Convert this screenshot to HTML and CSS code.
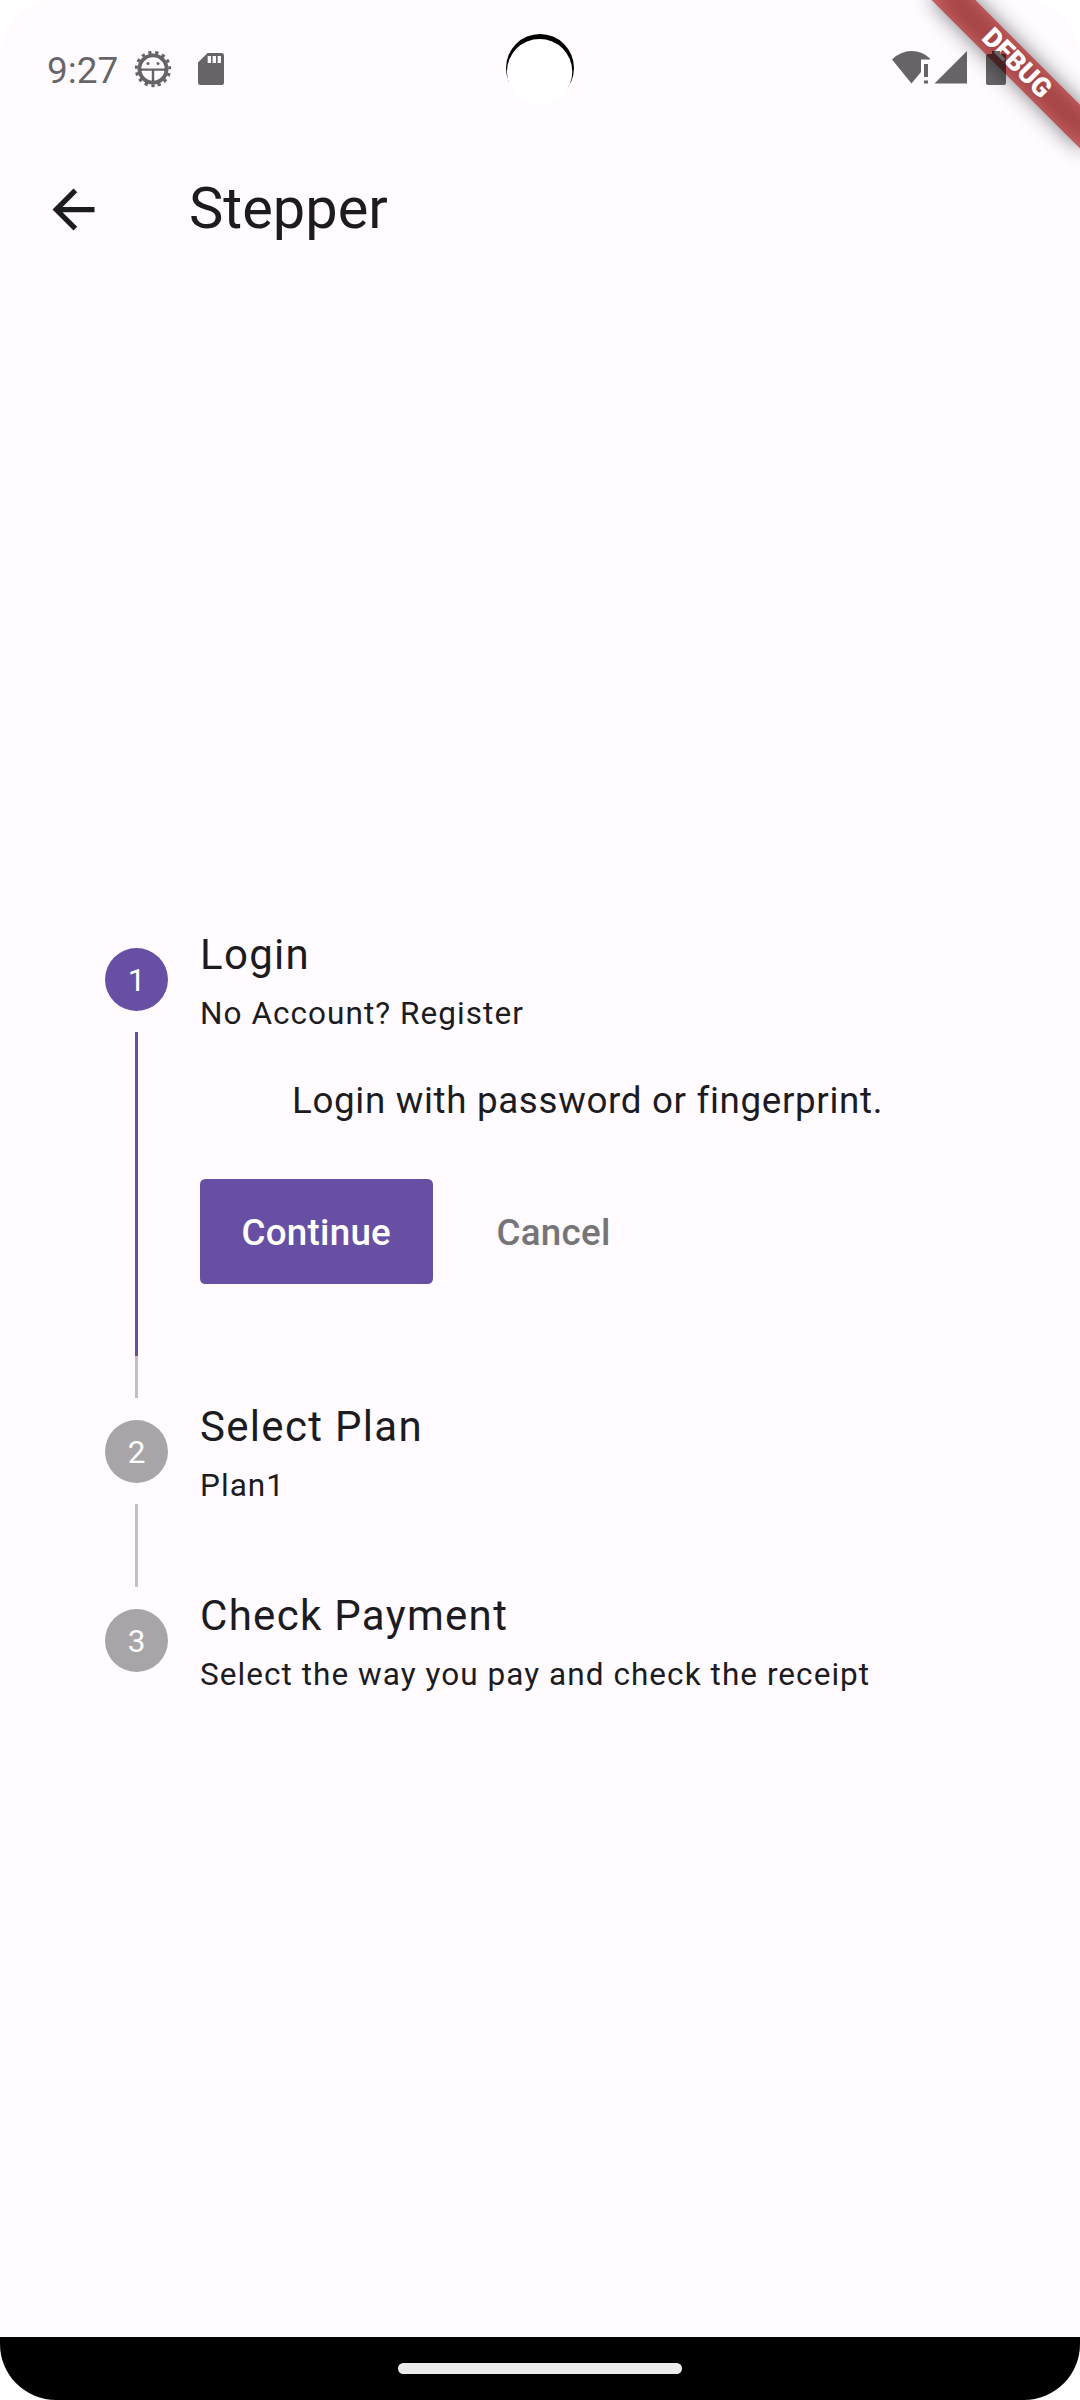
FILE: index.html
```html
<!DOCTYPE html>
<html lang="en">
<head>
<meta charset="utf-8">
<title>Stepper</title>
<link rel="stylesheet" href="styles.css">
</head>
<body>
<div class="screen">
  <div class="ribbon"><div class="ribbon-shadow"></div><div class="ribbon-band">DEBUG</div></div>
  <header class="status">
    <span class="time">9:27</span>
    <svg class="gear" width="38" height="38" viewBox="-19 -19 38 38">
      <circle r="13.6" fill="none" stroke="currentColor" stroke-width="3.8"/>
      <circle r="16.8" fill="none" stroke="currentColor" stroke-width="2.8" stroke-dasharray="3.300 3.737" transform="rotate(84.4)"/>
      <path d="M-12 -0.600H12V1.800H1.200V12H-1.200V1.800H-12Z" fill="currentColor"/>
      <circle cx="-5" cy="-5.500" r="1.500" fill="currentColor"/><circle cx="5" cy="-5.500" r="1.500" fill="currentColor"/>
    </svg>
    <svg class="sd" width="26" height="32" viewBox="0 0 26 32">
      <path fill="currentColor" fill-rule="evenodd" d="M9.500 0H23.500Q26 0 26 2.500V29.500Q26 32 23.500 32H2.500Q0 32 0 29.500V9.500ZM9.700 3V10H13V3ZM14.600 3V10H18V3ZM19.600 3V10H23V3Z"/>
    </svg>
    <span class="spring"></span>
    <svg class="signals" width="116" height="36" viewBox="0 0 116 36">
      <path fill="currentColor" d="M0 9.500Q8.500 1 19.500 1Q30.500 1 38 8.500V9.500H29V22L19.500 33.500Z"/>
      <path fill="currentColor" d="M32 14H36V27H32ZM32 30.500H36V33.500H32Z"/>
      <path fill="currentColor" d="M75 1V33.500H42.500Z"/>
      <path fill="currentColor" d="M100 1H108V4H112Q114 4 114 6V33Q114 35 112 35H96Q94 35 94 33V6Q94 4 96 4H100Z"/>
    </svg>
  </header>
  <svg class="camera" width="72" height="76" viewBox="504 32 72 76">
    <circle cx="540" cy="68" r="34"/><circle cx="539.600" cy="71.700" r="32.700" fill="#fff"/>
  </svg>
  <div class="appbar">
    <svg class="back" width="63" height="63" viewBox="0 0 24 24"><path fill="currentColor" d="M20 11H7.830l5.590-5.590L12 4l-8 8 8 8 1.410-1.410L7.830 13H20v-2z"/></svg>
    <h1>Stepper</h1>
  </div>
  <main class="stepper">
    <section class="step first">
      <div class="rail"><span class="dot active">1</span><span class="line active"></span><span class="line tail"></span></div>
      <div class="body">
        <h2>Login</h2>
        <p class="sub">No Account? Register</p>
        <p class="content">Login with password or fingerprint.</p>
        <div class="actions"><button class="primary">Continue</button><button class="plain">Cancel</button></div>
      </div>
    </section>
    <section class="step second">
      <div class="rail"><span class="dot">2</span><span class="line"></span></div>
      <div class="body"><h2>Select Plan</h2><p class="sub">Plan1</p></div>
    </section>
    <section class="step">
      <div class="rail"><span class="dot">3</span></div>
      <div class="body"><h2>Check Payment</h2><p class="sub">Select the way you pay and check the receipt</p></div>
    </section>
  </main>
  <footer class="nav"><span class="handle"></span></footer>
</div>
</body>
</html>
```
FILE: styles.css
```css
* { box-sizing: border-box; }
body { margin: 0; background: #fff; font-family: Roboto, sans-serif; color: #1c1b1f; }
h1, h2, p { margin: 0; font-weight: 400; }
.screen {
  position: relative;
  display: flex;
  flex-direction: column;
  width: 1080px;
  height: 2400px;
  overflow: hidden;
  border-radius: 56px;
  background: #fffbff;
}
.status {
  position: relative;
  display: flex;
  align-items: center;
  height: 138px;
  padding: 0 72px 0 47px;
  color: rgba(0, 0, 0, 0.6);
}
.time { width: 87px; padding-top: 3px; font-size: 37px; line-height: 44px; }
.sd { margin-left: 26px; }
.spring { flex: 1; }
.signals { margin-top: -2px; }
.camera { position: absolute; left: 504px; top: 32px; }
.ribbon { position: absolute; left: 1080px; top: 0; transform: rotate(45deg); transform-origin: 0 0; }
.ribbon-shadow, .ribbon-band { position: absolute; left: -105px; top: 73.500px; width: 210px; height: 31.500px; }
.ribbon-shadow { background: rgba(0, 0, 0, 0.5); filter: blur(10.400px); }
.ribbon-band {
  background: rgba(183, 28, 28, 0.627);
  color: #fff;
  font-size: 26.800px;
  font-weight: 900;
  line-height: 31.500px;
  text-align: center;
}
.appbar { display: flex; align-items: center; height: 143px; padding-left: 42px; }
.appbar h1 { margin-left: 84px; padding-bottom: 3px; font-size: 57.750px; line-height: 74px; }
.stepper { flex: 1; padding: 645px 0 0 105px; }
.step { display: flex; gap: 31.500px; height: 189px; }
.step.first { height: 472px; }
.rail { display: flex; flex-direction: column; align-items: center; width: 63px; padding-top: 22px; }
.dot {
  flex: none;
  width: 63px;
  height: 63px;
  margin-bottom: 21px;
  border-radius: 50%;
  background: #a7a5a8;
  color: #fff;
  font-size: 31.500px;
  line-height: 65px;
  text-align: center;
}
.dot.active { background: #6750a4; }
.line { width: 2.625px; height: 84px; background: #c1bfc1; }
.line.active { height: 325px; background: #6750a4; }
.line.tail { height: 42px; }
.body { flex: 1; }
.body h2 { padding-left: 0.500px; font-size: 42px; line-height: 57px; letter-spacing: 1.310px; }
.sub { padding-left: 0.500px; font-size: 31.500px; line-height: 42px; margin-top: 10px; letter-spacing: 1.050px; }
.content { margin: 39px 0 0 92.500px; font-size: 36.750px; line-height: 53px; letter-spacing: 0.660px; }
.actions { display: flex; gap: 21.500px; margin-top: 52px; }
button {
  height: 105px;
  padding: 2px 42px 0;
  border: 0;
  border-radius: 5.250px;
  background: none;
  font: 500 36.750px/103px Roboto, sans-serif;
  letter-spacing: 0.260px;
}
.primary { width: 233.500px; padding-right: 42px; background: #6750a4; color: #fff; }
.plain { color: #757478; }
.nav { display: flex; justify-content: center; align-items: center; height: 63px; background: #000; }
.handle { width: 284px; height: 10.500px; border-radius: 5.250px; background: #ebebeb; }
```
